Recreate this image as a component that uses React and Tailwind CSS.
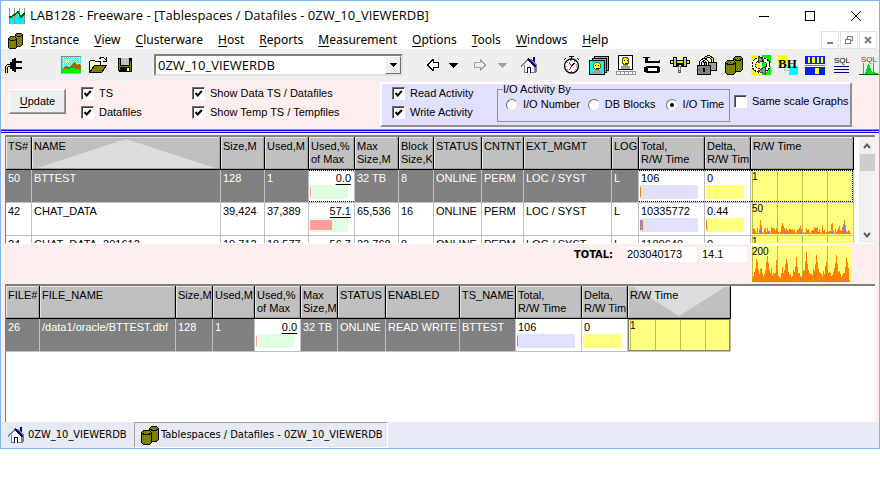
import React from 'react';

const menuItems = ['Instance', 'View', 'Clusterware', 'Host', 'Reports', 'Measurement', 'Options', 'Tools', 'Windows', 'Help'];

const tablespaceColumns = [
    { key: 'ts', lines: ['TS#'], width: 26 },
    { key: 'name', lines: ['NAME'], width: 189, sort: 'up' },
    { key: 'size', lines: ['Size,M'], width: 44 },
    { key: 'used', lines: ['Used,M'], width: 44 },
    { key: 'pct', lines: ['Used,%', 'of Max'], width: 46 },
    { key: 'max', lines: ['Max', 'Size,M'], width: 44 },
    { key: 'block', lines: ['Block', 'Size,K'], width: 35 },
    { key: 'status', lines: ['STATUS'], width: 48 },
    { key: 'content', lines: ['CNTNT'], width: 42 },
    { key: 'ext', lines: ['EXT_MGMT'], width: 88 },
    { key: 'log', lines: ['LOG'], width: 27 },
    { key: 'total', lines: ['Total,', 'R/W Time'], width: 66 },
    { key: 'delta', lines: ['Delta,', 'R/W Time'], width: 46 },
    { key: 'chart', lines: ['R/W Time'], width: 103 }
];

const datafileColumns = [
    { key: 'file', lines: ['FILE#'], width: 34 },
    { key: 'name', lines: ['FILE_NAME'], width: 136 },
    { key: 'size', lines: ['Size,M'], width: 37 },
    { key: 'used', lines: ['Used,M'], width: 42 },
    { key: 'pct', lines: ['Used,%', 'of Max'], width: 46 },
    { key: 'max', lines: ['Max', 'Size,M'], width: 37 },
    { key: 'status', lines: ['STATUS'], width: 48 },
    { key: 'enabled', lines: ['ENABLED'], width: 74 },
    { key: 'tsName', lines: ['TS_NAME'], width: 56 },
    { key: 'total', lines: ['Total,', 'R/W Time'], width: 66 },
    { key: 'delta', lines: ['Delta,', 'R/W Time'], width: 46 },
    { key: 'chart', lines: ['R/W Time'], width: 103, sort: 'down' }
];

const chatActivity = [
    2, 6, 5, 3, 1, 6, 1, 5, 14, 9, 2, 1, 5, 6, 2, 6, 3, 3, 1, 7, 6, 6, 5, 3, 6, 3, 2, 1, 2, 8,
    11, 8, 6, 4, 6, 4, 3, 5, 5, 4, 5, 3, 5, 2, 1, 4, 5, 6, 8, 5, 1, 2, 1, 2, 6, 4, 5, 2, 1, 3,
    4, 4, 7, 6, 6, 7, 2, 5, 2, 1, 9, 3, 4, 1, 2, 3, 2, 3, 3, 10, 11, 3, 1, 5, 2, 4, 6, 8, 4, 3,
    7, 10, 14, 8, 3, 2, 4, 3, 1, 0
];
const totalActivity = [
    3, 6, 10, 14, 23, 20, 12, 8, 13, 14, 9, 6, 8, 12, 20, 26, 19, 12, 9, 14, 7, 9, 8, 9, 22, 16, 6, 5, 4, 9,
    15, 9, 12, 18, 23, 19, 10, 7, 8, 5, 6, 12, 10, 16, 25, 15, 9, 9, 6, 5, 7, 12, 11, 21, 30, 18, 12, 9, 8, 8,
    7, 13, 11, 18, 27, 20, 13, 10, 9, 8, 6, 11, 8, 16, 20, 13, 9, 10, 9, 6, 7, 10, 14, 19, 27, 18, 10, 11, 8, 5,
    7, 9, 9, 15, 24, 20, 14, 2, 0, 0
];

const tablespaces = [
    { selected: true, ts: '50', name: 'BTTEST', size: '128', used: '1', pct: '0.0', pctBar: 1, max: '32 TB', block: '8', status: 'ONLINE', content: 'PERM', ext: 'LOC / SYST', log: 'L', total: '106', totalBar: 1, delta: '0', deltaBar: 0, scale: '1', data: [], writes: [] },
    { ts: '42', name: 'CHAT_DATA', size: '39,424', used: '37,389', pct: '57.1', pctBar: 22, max: '65,536', block: '16', status: 'ONLINE', content: 'PERM', ext: 'LOC / SYST', log: 'L', total: '10335772', totalBar: 2, totalRead: 1, delta: '0.44', deltaBar: 1, scale: '50', data: chatActivity, writes: [[8, 4], [16, 2], [32, 2], [48, 2], [80, 2], [91, 6], [92, 9]] },
    { ts: '24', name: 'CHAT_DATA_201612', size: '19,712', used: '18,577', pct: '56.7', pctBar: 22, max: '32,768', block: '8', status: 'ONLINE', content: 'PERM', ext: 'LOC / SYST', log: 'L', total: '1180640', totalBar: 1, delta: '0', deltaBar: 0, scale: '1', data: [], writes: [] }
];

const datafiles = [
    { selected: true, file: '26', name: '/data1/oracle/BTTEST.dbf', size: '128', used: '1', pct: '0.0', pctBar: 1, max: '32 TB', status: 'ONLINE', enabled: 'READ WRITE', tsName: 'BTTEST', total: '106', totalBar: 1, delta: '0', deltaBar: 0, scale: '1', data: [], writes: [] }
];

/* ---------- icons ---------- */

const Icon = ({ children, className = 'w-5 h-5', box = '0 0 20 20' }) => (
    <svg className={`${className} shrink-0`} viewBox={box} shapeRendering="crispEdges" aria-hidden="true">
        {children}
    </svg>
);

const LogoIcon = () => (
    <Icon className="w-4 h-4" box="0 0 16 16">
        <path d="M1 9l3-2 3-2 2-1 3 5 2-2 2 2v7H1z" fill="#00f0ff" />
        <path d="M.5 0v16M5.500 0v16M10.500 0v16M15.500 0v16" stroke="#909090" />
        <path d="M0 9h2l3-2 4-3 3 5 4-4" fill="none" stroke="#006000" strokeWidth="1.5" />
    </Icon>
);

const CylindersIcon = ({ className = 'w-5 h-5' }) => (
    <Icon className={className}>
        <g fill="#808000" stroke="#000">
            <path d="M9.500 3.500l2-2h5l2 2v11l-2 2h-5l-2-2z" />
            <path d="M10 4l2 1.500h4l2-1.500" fill="none" />
            <path d="M1.500 7.500l2-2h6l2 2v10l-2 2h-6l-2-2z" />
            <path d="M2 8l2 1.500h5l2-1.500" fill="none" />
        </g>
    </Icon>
);

const HomeIcon = () => (
    <Icon className="w-4 h-4" box="0 0 16 16">
        <path d="M8 2l6 7v7H3V9z" fill="#fff" />
        <path d="M8 2h3l5 6v7l-3 1V9z" fill="#808080" />
        <path d="M12 0h2v6l-2-2z" fill="#000080" />
        <path d="M0 9.500l8-8M3.500 8v7.500h10V9" stroke="#808080" fill="none" />
        <path d="M7 2l8 8" stroke="#000080" fill="none" strokeWidth="1.500" />
        <path d="M6 10h4v6H6z" fill="#000080" />
        <path d="M7 11h2v5H7z" fill="#fff" />
    </Icon>
);

const PlugIcon = () => (
    <Icon className="w-[18px] h-[18px]" box="0 0 18 18">
        <path d="M7 3h2V2h2v14H9v-1H7v-2H5V6h2z" />
        <path d="M11 5h6v2h-6zM11 11h6v2h-6zM4 8h3v3H4z" />
        <path d="M1.500 17v-6l2-2H5" fill="none" stroke="#000" strokeWidth="3" />
        <path d="M1.500 17v-6l2-2H5" fill="none" stroke="#ffe860" />
    </Icon>
);

const PictureIcon = () => (
    <Icon className="w-5 h-[18px]" box="0 0 20 18">
        <path d="M0 0h20v18H0z" fill="#60e8f0" />
        <path d="M0 1.500h20M0 3.500h20M0 5.500h20M0 7.500h20M0 9.500h20" stroke="#fff" strokeDasharray="1 1" />
        <circle cx="6" cy="5" r="2.500" fill="#fff060" />
        <path d="M1 13l4-3 3 1 5-5 3 3 2-1 2 2v5H1z" fill="#907000" />
        <path d="M0 12l6 1 6-1 8 2v3H0z" fill="#00f000" />
        <path d="M.5 18V.5H20" stroke="#808080" fill="none" />
    </Icon>
);

const FolderIcon = () => (
    <Icon className="w-[18px] h-[18px]" box="0 0 18 18">
        <path d="M.5 16V5.500l1-1h4l1 1h5V9" fill="#ffffb0" stroke="#000" />
        <path d="M.5 16.500l5-7h12l-5 7z" fill="#808000" stroke="#000" />
        <path d="M10.500 3l2-2h2l2 3M17 1v4h-3" fill="none" stroke="#000" />
    </Icon>
);

const FloppyIcon = () => (
    <Icon className="w-[14px] h-[14px]" box="0 0 14 14">
        <path d="M0 0h14v14H1l-1-1z" />
        <path d="M1 1h1v11H1zM12 3h1v10h-1zM2 8h10v1H2z" fill="#808000" />
        <path d="M3 0h8v7H3z" fill="#c0c0c0" />
        <path d="M9 10h2v3H9z" fill="#fff" />
    </Icon>
);

const ArrowIcon = ({ flip, color, fill }) => (
    <Icon className={flip ? 'w-3 h-3 -scale-x-100' : 'w-3 h-3'} box="0 0 12 12">
        <path d="M.5 6L6 .5V3.500h5.500v5H6v3z" fill={fill} stroke={color} />
    </Icon>
);

const CaretIcon = ({ color = '#000' }) => (
    <Icon className="w-[9px] h-[5px]" box="0 0 9 5">
        <path d="M0 0h9L4.500 5z" fill={color} />
    </Icon>
);

const Face = () => (
    <>
        <path d="M4 16q0-4 5-4t5 4z" fill="#a0a0a0" />
        <circle cx="9" cy="8" r="3.500" fill="#ffff00" stroke="#706000" />
        <path d="M7 7h1v1H7zM10 7h1v1h-1zM8 9.500h3v1H8z" />
    </>
);

const tools = [
    {
        label: 'Stopwatch',
        icon: (
            <Icon>
                <circle cx="9.500" cy="11" r="7" fill="#fff" stroke="#000" shapeRendering="auto" strokeWidth="1.300" />
                <circle cx="9.500" cy="11" r="5.500" fill="none" stroke="#000" strokeDasharray="1 3" shapeRendering="auto" />
                <path d="M7 1.500h5M9.500 1v3M2 5l2-2M17 5l-2-2" stroke="#000" fill="none" />
                <path d="M9.500 11L7 7.500M9.500 11l-2 4" stroke="#f00000" fill="none" />
                <path d="M9.500 11l3-3" stroke="#000" />
            </Icon>
        )
    },
    {
        label: 'Sessions',
        icon: (
            <Icon>
                <path d="M5.500 1.500h14v14h-14z" fill="#00e8f8" stroke="#000" />
                <path d="M3.500 3.500h14v14h-14z" fill="#00e8f8" stroke="#000" />
                <path d="M.5 5.500h15v14H.5z" fill="#00f8ff" stroke="#000" />
                <g transform="translate(-1 3)"><Face /></g>
            </Icon>
        )
    },
    {
        label: 'User activity',
        icon: (
            <Icon>
                <path d="M2.500.5h14v14h-14z" fill="#fff" stroke="#000" />
                <g transform="translate(.5 -2)"><Face /></g>
                <path d="M.5 16h19v3.500H.5zM4.500 16v3M8.500 16v3M12.500 16v3M16.500 16v3" fill="#fff" stroke="#909090" />
            </Icon>
        )
    },
    {
        label: 'Latches',
        icon: (
            <Icon>
                <path d="M0 2h7v1H0zM2 2h3v6H2zM2 6h15v2H2zM16 5h1v3h-1z" />
                <path d="M3 11h13v1h1v5h-1v1H3v-1H1v-5h2z" />
                <path d="M5 13h9v3H5z" fill="#fff" />
            </Icon>
        )
    },
    {
        label: 'Waits',
        icon: (
            <Icon>
                <path d="M.5 5.500h19v3H.5z" fill="#f8e800" stroke="#000" />
                <path d="M3.500 2.500h3v9h-3zM13.500 2.500h3v9h-3z" fill="#c0c0c0" stroke="#000" />
                <path d="M7.500 12V8.500h4V12" stroke="#000" fill="none" strokeWidth="2" />
                <path d="M8.500 11.500h2v4h-2z" fill="#fff" stroke="#808080" />
                <path d="M8.500 15.500h2v2h-2z" fill="#ffff00" stroke="#606060" />
            </Icon>
        )
    },
    {
        label: 'Locks',
        icon: (
            <Icon>
                <path d="M7.500 8V4q3.500-5 8 0v4" stroke="#000" strokeWidth="3" fill="none" />
                <path d="M7.500 8V4q3.500-5 8 0v4" stroke="#e8e860" fill="none" />
                <path d="M7.500 7.500h12v8h-12z" fill="#a0a0a0" stroke="#000" />
                <path d="M3.500 11V7q3.500-5 7 0v4" stroke="#000" strokeWidth="3" fill="none" />
                <path d="M3.500 11V7q3.500-5 7 0v4" stroke="#fff" fill="none" />
                <path d="M.5 10.500h13v9H.5z" fill="#808080" stroke="#000" />
                <path d="M6 13h2v4H6z" />
            </Icon>
        )
    },
    { label: 'Tablespaces', icon: <CylindersIcon /> },
    {
        label: 'Replication',
        icon: (
            <Icon>
                <path d="M0 0h9v20H0z" fill="#ffff00" />
                <path d="M11 0h9v20h-9z" fill="#00f000" />
                <ellipse cx="10" cy="10" rx="8" ry="6" fill="none" stroke="#fff" strokeWidth="4" />
                <ellipse cx="10" cy="10" rx="9" ry="7.500" fill="none" stroke="#000" strokeDasharray="2 1" />
                <ellipse cx="10" cy="10" rx="6" ry="4" fill="none" stroke="#000" strokeDasharray="2 1" />
                <path d="M7 1v7l6-3zM14 12v7l-7-3z" fill="#909090" stroke="#404040" />
            </Icon>
        )
    },
    {
        label: 'Buffer hit',
        icon: (
            <Icon>
                <path d="M0 0h9v10H0z" fill="#ffff00" />
                <path d="M11 11h9v9h-9z" fill="#00f8ff" />
                <path d="M6.500 10v5.500h5" fill="none" stroke="#c0c0c0" />
                <text x="0" y="13" fontFamily="Liberation Serif, serif" fontWeight="bold" fontSize="13">BH</text>
            </Icon>
        )
    },
    {
        label: 'Buffer pool',
        icon: (
            <Icon>
                <path d="M0 1h20v8H0zM0 12h20v8H0z" fill="#0020f0" />
                <path d="M3 2h2v6H3zM7 2h3v6H7zM12 2h2v6h-2zM16 2h2v6h-2zM10 13h4v6h-4z" fill="#ffff00" />
                <path d="M0 10.500h20" stroke="#808080" />
            </Icon>
        )
    },
    {
        label: 'SQL list',
        icon: (
            <Icon>
                <text x="2" y="8" fontFamily="Liberation Sans, sans-serif" fontSize="8">SQL</text>
                <path d="M2 11.500h15M2 14.500h15M2 17.500h15" stroke="#000080" />
            </Icon>
        )
    },
    {
        label: 'SQL activity',
        icon: (
            <Icon>
                <text x="2" y="7" fontFamily="Liberation Sans, sans-serif" fontSize="8" fill="#f00000">SQL</text>
                <path d="M4.500 8v11M14.500 8v11" stroke="#808080" />
                <path d="M1 19h5l3-9 1-2 3 9 6 1v2H1z" fill="#00d820" />
                <path d="M0 19.500h20" stroke="#006000" />
            </Icon>
        )
    }
];

/* ---------- controls ---------- */

const Checkbox = ({ label, checked = false }) => (
    <label className="flex items-center gap-[5px] h-[19px] whitespace-nowrap">
        <span className="grid place-items-center">
            <input
                type="checkbox"
                defaultChecked={checked}
                className="peer appearance-none col-start-1 row-start-1 w-[13px] h-[13px] bg-white border border-t-[#707070] border-l-[#707070] border-r-white border-b-white shadow-[inset_1px_1px_0_#404040]"
            />
            <svg className="col-start-1 row-start-1 w-[9px] h-[9px] hidden peer-checked:block pointer-events-none" viewBox="0 0 9 9">
                <path d="M1.500 4l2.200 2.500L7.800 2" fill="none" stroke="#000" strokeWidth="2" />
            </svg>
        </span>
        {label}
    </label>
);

const Radio = ({ label, checked = false }) => (
    <label className="flex items-center gap-[5px] whitespace-nowrap">
        <span className="grid place-items-center">
            <input
                type="radio"
                name="ioActivity"
                defaultChecked={checked}
                className="peer appearance-none col-start-1 row-start-1 w-3 h-3 rounded-full bg-white border border-t-[#707070] border-l-[#707070] border-r-[#e0e0e0] border-b-[#e0e0e0]"
            />
            <span className="col-start-1 row-start-1 w-1 h-1 rounded-full bg-black hidden peer-checked:block" />
        </span>
        {label}
    </label>
);

/* Gráfico de actividad: una barra de 1px por muestra */
const ActivityChart = ({ scale, data, writes, tall = false }) => {
    const height = tall ? 36 : 31;
    return (
        <svg className={tall ? 'block w-[100px] h-9' : 'block w-[100px] h-[31px]'} viewBox={`0 0 100 ${height}`} shapeRendering="crispEdges">
            <rect width="100" height={height} fill="#ffff80" />
            {data.map((value, i) => (
                <rect key={i} x={i} y={height - value} width="1" height={value} fill="#ff8000" />
            ))}
            {writes.map(([x, value]) => (
                <rect key={x} x={x} y={height - value} width="2" height={value} fill="#8080ff" />
            ))}
            <path d={`M.5 0V${height}M25.500 0V${height}M50.500 0V${height}M75.500 0V${height}`} stroke="#a0a030" strokeOpacity="0.7" />
            <text x="0" y="9" fontFamily="Liberation Sans, sans-serif" fontSize="10">{scale}</text>
        </svg>
    );
};

const HeaderCell = ({ column }) => (
    <th scope="col" className="p-0 border-r border-b border-black bg-[#c0c0c0] font-normal text-left">
        <div className="grid h-8 border border-t-[#e4e4e4] border-l-[#e4e4e4] border-r-[#a0a0a0] border-b-[#a0a0a0] overflow-hidden">
            {column.sort && (
                <svg className="col-start-1 row-start-1 w-full h-[30px] px-1" viewBox="0 0 100 30" preserveAspectRatio="none">
                    <path d={column.sort === 'up' ? 'M0 30L50 1L100 30z' : 'M0 0L50 29L100 0z'} fill="#dcdcdc" />
                </svg>
            )}
            <div className="col-start-1 row-start-1 pt-[2px] pl-px leading-[13px] whitespace-nowrap">
                {column.lines.map(line => <div key={line}>{line}</div>)}
            </div>
        </div>
    </th>
);

const BodyCell = ({ row, field }) => {
    const focus = row.selected && row.ts ? 'border-y border-dotted border-black' : 'border-y border-transparent';

    if (field === 'chart') {
        return (
            <td className="p-0 border-r border-b border-[#c0c0c0] bg-[#ffff80]">
                <div className={`h-8 pl-px overflow-hidden ${row.selected && row.ts ? 'border-y border-r border-dotted border-black' : ''} ${row.file ? 'border border-[#808080]' : ''}`}>
                    <ActivityChart scale={row.scale} data={row.data} writes={row.writes} />
                </div>
            </td>
        );
    }

    if (field === 'pct') {
        return (
            <td className="p-0 border-r border-b border-[#c0c0c0] bg-white text-black">
                <div className={`h-8 ${focus}`}>
                    <div className="pt-px pr-[3px] h-[14px] leading-[13px] text-right underline underline-offset-2">{row.pct}</div>
                    <div className="ml-px w-[38px] h-[14px] py-[2px] bg-[#e0ffe0]">
                        <div className="h-[10px] bg-[#ff9c9c]" style={{ width: row.pctBar }} />
                    </div>
                </div>
            </td>
        );
    }

    if (field === 'total' || field === 'delta') {
        const isTotal = field === 'total';
        return (
            <td className="p-0 border-r border-b border-[#c0c0c0] bg-white text-black">
                <div className={`h-8 ${focus}`}>
                    <div className="pt-px pl-[2px] h-[14px] leading-[13px]">{row[field]}</div>
                    <div className={`ml-px h-[14px] py-[2px] flex ${isTotal ? 'w-[58px] bg-[#e0e0ff]' : 'w-[38px] bg-[#ffff80]'}`}>
                        {isTotal && row.totalRead && <div className="w-px h-[10px] bg-[#8080ff]" />}
                        <div className="h-[10px] bg-[#ff8000]" style={{ width: isTotal ? row.totalBar : row.deltaBar }} />
                    </div>
                </div>
            </td>
        );
    }

    return (
        <td className={`p-0 border-r border-b border-[#c0c0c0] ${row.selected ? 'bg-[#808080] text-white' : 'bg-white text-black'}`}>
            <div className="h-8 pt-[2px] pl-[2px] leading-[13px] whitespace-nowrap overflow-hidden">{row[field]}</div>
        </td>
    );
};

const DataGrid = ({ label, columns, rows }) => (
    <table aria-label={label} className="table-fixed w-0 border-separate border-spacing-0">
        <colgroup>
            {columns.map(column => <col key={column.key} style={{ width: column.width }} />)}
        </colgroup>
        <thead>
            <tr>
                {columns.map(column => <HeaderCell key={column.key} column={column} />)}
            </tr>
        </thead>
        <tbody>
            {rows.map(row => (
                <tr key={row.name}>
                    {columns.map(column => <BodyCell key={column.key} row={row} field={column.key} />)}
                </tr>
            ))}
        </tbody>
    </table>
);

const TitleBar = () => (
    <header className="flex items-center h-[30px] pl-2">
        <LogoIcon />
        <h1 className="flex-1 pl-[5px] text-[13px] whitespace-nowrap font-['Open_Sans',sans-serif]">
            LAB128 - Freeware - [Tablespaces / Datafiles - 0ZW_10_VIEWERDB]
        </h1>
        <button aria-label="Minimize" className="w-[46px] h-7 flex items-center justify-center">
            <Icon className="w-[10px] h-[10px]" box="0 0 10 10"><path d="M0 5.500h10" stroke="#000" /></Icon>
        </button>
        <button aria-label="Maximize" className="w-[46px] h-7 flex items-center justify-center">
            <Icon className="w-[10px] h-[10px]" box="0 0 10 10"><path d="M.5.5h9v9h-9z" fill="none" stroke="#000" /></Icon>
        </button>
        <button aria-label="Close" className="w-[46px] h-7 flex items-center justify-center">
            <svg className="w-[10px] h-[10px]" viewBox="0 0 10 10"><path d="M0 0l10 10M10 0L0 10" stroke="#000" /></svg>
        </button>
    </header>
);

const MenuBar = () => (
    <div className="flex items-center h-[18px] pl-[6px] pr-[2px]">
        <CylindersIcon className="w-[17px] h-[17px]" />
        <nav className="flex flex-1 gap-[15px] pl-[7px] text-[12px] leading-[18px]">
            {menuItems.map(item => (
                <button key={item}><span className="underline underline-offset-2">{item[0]}</span>{item.slice(1)}</button>
            ))}
        </nav>
        <div className="flex gap-px">
            <button aria-label="Minimize window" className="w-[18px] h-[18px] border border-[#e0e0e0] flex items-center justify-center">
                <Icon className="w-2 h-2" box="0 0 8 8"><path d="M1 6h6v2H1z" fill="#708090" /></Icon>
            </button>
            <button aria-label="Restore window" className="w-[18px] h-[18px] border border-[#e0e0e0] flex items-center justify-center">
                <Icon className="w-2 h-2" box="0 0 8 8"><path d="M2.500 3V.5h5v4H6M.5 3.500h5v4h-5zM0 3.500h6M2 .5h6" fill="none" stroke="#708090" /></Icon>
            </button>
            <button aria-label="Close window" className="w-[18px] h-[18px] border border-[#e0e0e0] flex items-center justify-center">
                <svg className="w-2 h-2" viewBox="0 0 8 8"><path d="M1 1l6 6M7 1L1 7" stroke="#708090" strokeWidth="2" /></svg>
            </button>
        </div>
    </div>
);

const Toolbar = () => (
    <div className="flex items-center h-8 pl-1 bg-[#efefef]">
        <button aria-label="Connect"><PlugIcon /></button>
        <div className="flex items-center pl-[38px] gap-2">
            <button aria-label="Wallpaper"><PictureIcon /></button>
            <button aria-label="Open"><FolderIcon /></button>
            <button aria-label="Save" className="pl-[3px]"><FloppyIcon /></button>
        </div>
        <div className="grid items-center ml-[22px] w-[249px] h-[22px] bg-white border-2 border-t-[#808080] border-l-[#808080] border-r-[#e0e0e0] border-b-[#e0e0e0]">
            <select aria-label="Instance" className="appearance-none col-start-1 row-start-1 w-full pl-[2px] text-[13px] leading-[18px] bg-transparent font-['Open_Sans',sans-serif]">
                <option>0ZW_10_VIEWERDB</option>
            </select>
            <span className="col-start-1 row-start-1 justify-self-end w-4 h-[18px] flex items-center justify-center bg-[#efefef] border border-t-white border-l-white border-r-[#707070] border-b-[#707070] pointer-events-none">
                <Icon className="w-[7px] h-1" box="0 0 7 4"><path d="M0 0h7L3.500 4z" /></Icon>
            </span>
        </div>
        <div className="flex items-center pl-6">
            <button aria-label="Back"><ArrowIcon color="#000" fill="#fff" /></button>
            <button aria-label="Back history" className="pl-[10px]"><CaretIcon /></button>
            <button aria-label="Forward" className="pl-4"><ArrowIcon flip color="#a0a0a0" fill="none" /></button>
            <button aria-label="Forward history" className="pl-3"><CaretIcon color="#a0a0a0" /></button>
            <button aria-label="Home" className="pl-[14px]"><HomeIcon /></button>
        </div>
        <div className="flex flex-1 justify-end gap-[7px]">
            {tools.map(tool => <button key={tool.label} aria-label={tool.label}>{tool.icon}</button>)}
        </div>
    </div>
);

const OptionsPanel = () => (
    <div className="flex items-start h-12 pt-px pl-2 bg-[#ffeeee]">
        <button className="mt-[7px] w-[57px] h-[25px] bg-[#efefef] border border-t-white border-l-white border-r-[#808080] border-b-[#808080] shadow-[inset_-1px_-1px_0_#a0a0a0]">
            <span className="underline underline-offset-2">U</span>pdate
        </button>
        <div className="pl-[15px] pt-[2px] w-[111px]">
            <Checkbox label="TS" checked />
            <Checkbox label="Datafiles" checked />
        </div>
        <div className="pl-[15px] pt-[2px] w-[203px]">
            <Checkbox label="Show Data TS / Datafiles" checked />
            <Checkbox label="Show Temp TS / Tempfiles" checked />
        </div>
        <div className="flex w-[472px] h-[45px] bg-[#e0e0ff] border-2 border-t-white border-l-white border-r-[#909090] border-b-[#909090]">
            <div className="pl-[10px] w-[115px]">
                <Checkbox label="Read Activity" checked />
                <Checkbox label="Write Activity" checked />
            </div>
            <fieldset className="w-[233px] h-[38px] border border-[#909090] pl-2">
                <legend className="leading-[11px] -ml-[3px]">I/O Activity By</legend>
                <div className="flex items-center gap-2 pt-[3px]">
                    <Radio label="I/O Number" />
                    <Radio label="DB Blocks" />
                    <span className="pl-[2px]"><Radio label="I/O Time" checked /></span>
                </div>
            </fieldset>
            <div className="pl-[4px] pt-2">
                <Checkbox label="Same scale Graphs" />
            </div>
        </div>
    </div>
);

const ScrollBar = () => (
    <div className="flex flex-col items-center w-4 bg-[#f0f0f0]">
        <button aria-label="Scroll up" className="w-4 h-[17px] flex items-center justify-center">
            <svg className="w-2 h-[6px]" viewBox="0 0 8 6"><path d="M1 5l3-3.500L7 5" fill="none" stroke="#606060" strokeWidth="2" /></svg>
        </button>
        <div className="w-[15px] h-[17px] bg-[#cdcdcd]" />
        <div className="flex-1" />
        <button aria-label="Scroll down" className="w-4 h-[17px] flex items-center justify-center">
            <svg className="w-2 h-[6px]" viewBox="0 0 8 6"><path d="M1 1l3 3.500L7 1" fill="none" stroke="#606060" strokeWidth="2" /></svg>
        </button>
    </div>
);

const TotalsRow = () => (
    <div className="flex h-10 pt-[2px]">
        <div className="w-[626px] pr-[14px] pt-px leading-[15px] text-right font-bold font-['DejaVu_Sans_Condensed',sans-serif]">TOTAL:</div>
        <output className="w-[70px] h-[15px] leading-[15px] bg-white mt-px">203040173</output>
        <output className="w-[45px] h-[15px] leading-[15px] bg-white mt-px ml-[5px]">14.1</output>
        <div className="pl-[5px]">
            <ActivityChart tall scale="200" data={totalActivity} writes={[[8, 1], [17, 1], [33, 1], [48, 1], [92, 3]]} />
        </div>
    </div>
);

const WindowTabs = () => (
    <div className="flex h-[26px] bg-[#e6eaf5] text-[11px] font-['DejaVu_Sans_Condensed',sans-serif]">
        <button className="flex items-center gap-1 pl-[7px] w-[133px] whitespace-nowrap">
            <HomeIcon />0ZW_10_VIEWERDB
        </button>
        <button className="flex items-center gap-px pl-[5px] w-[254px] whitespace-nowrap border border-t-[#a0a0a0] border-l-[#a0a0a0] border-r-white border-b-white">
            <CylindersIcon />Tablespaces / Datafiles - 0ZW_10_VIEWERDB
        </button>
    </div>
);

export default function App() {
    return (
        <div className="min-h-screen bg-white text-black font-['Noto_Sans',sans-serif]">
            <div className="border border-[#7eb4ea]">
                <TitleBar />
                <MenuBar />
                <Toolbar />
                <main className="bg-[#ffeeee] text-[11px] leading-[13px] font-['Liberation_Sans',sans-serif]">
                    <OptionsPanel />
                    <div className="h-[5px] bg-[#d0d0d0] border-t border-[#909090]">
                        <div className="h-[3px] border-y border-[#0000e0]" />
                        <div className="h-px bg-white" />
                    </div>
                    <div className="mt-px mx-1 flex h-[109px] bg-white border-t-2 border-l border-[#808080] border-b border-b-white overflow-hidden">
                        <div className="flex-1 overflow-hidden">
                            <DataGrid label="Tablespaces" columns={tablespaceColumns} rows={tablespaces} />
                        </div>
                        <ScrollBar />
                    </div>
                    <TotalsRow />
                    <div className="mx-1 min-h-[138px] bg-white border-t-2 border-l border-t-[#808080] border-l-[#808080]">
                        <DataGrid label="Datafiles" columns={datafileColumns} rows={datafiles} />
                    </div>
                </main>
                <WindowTabs />
            </div>
        </div>
    );
}
